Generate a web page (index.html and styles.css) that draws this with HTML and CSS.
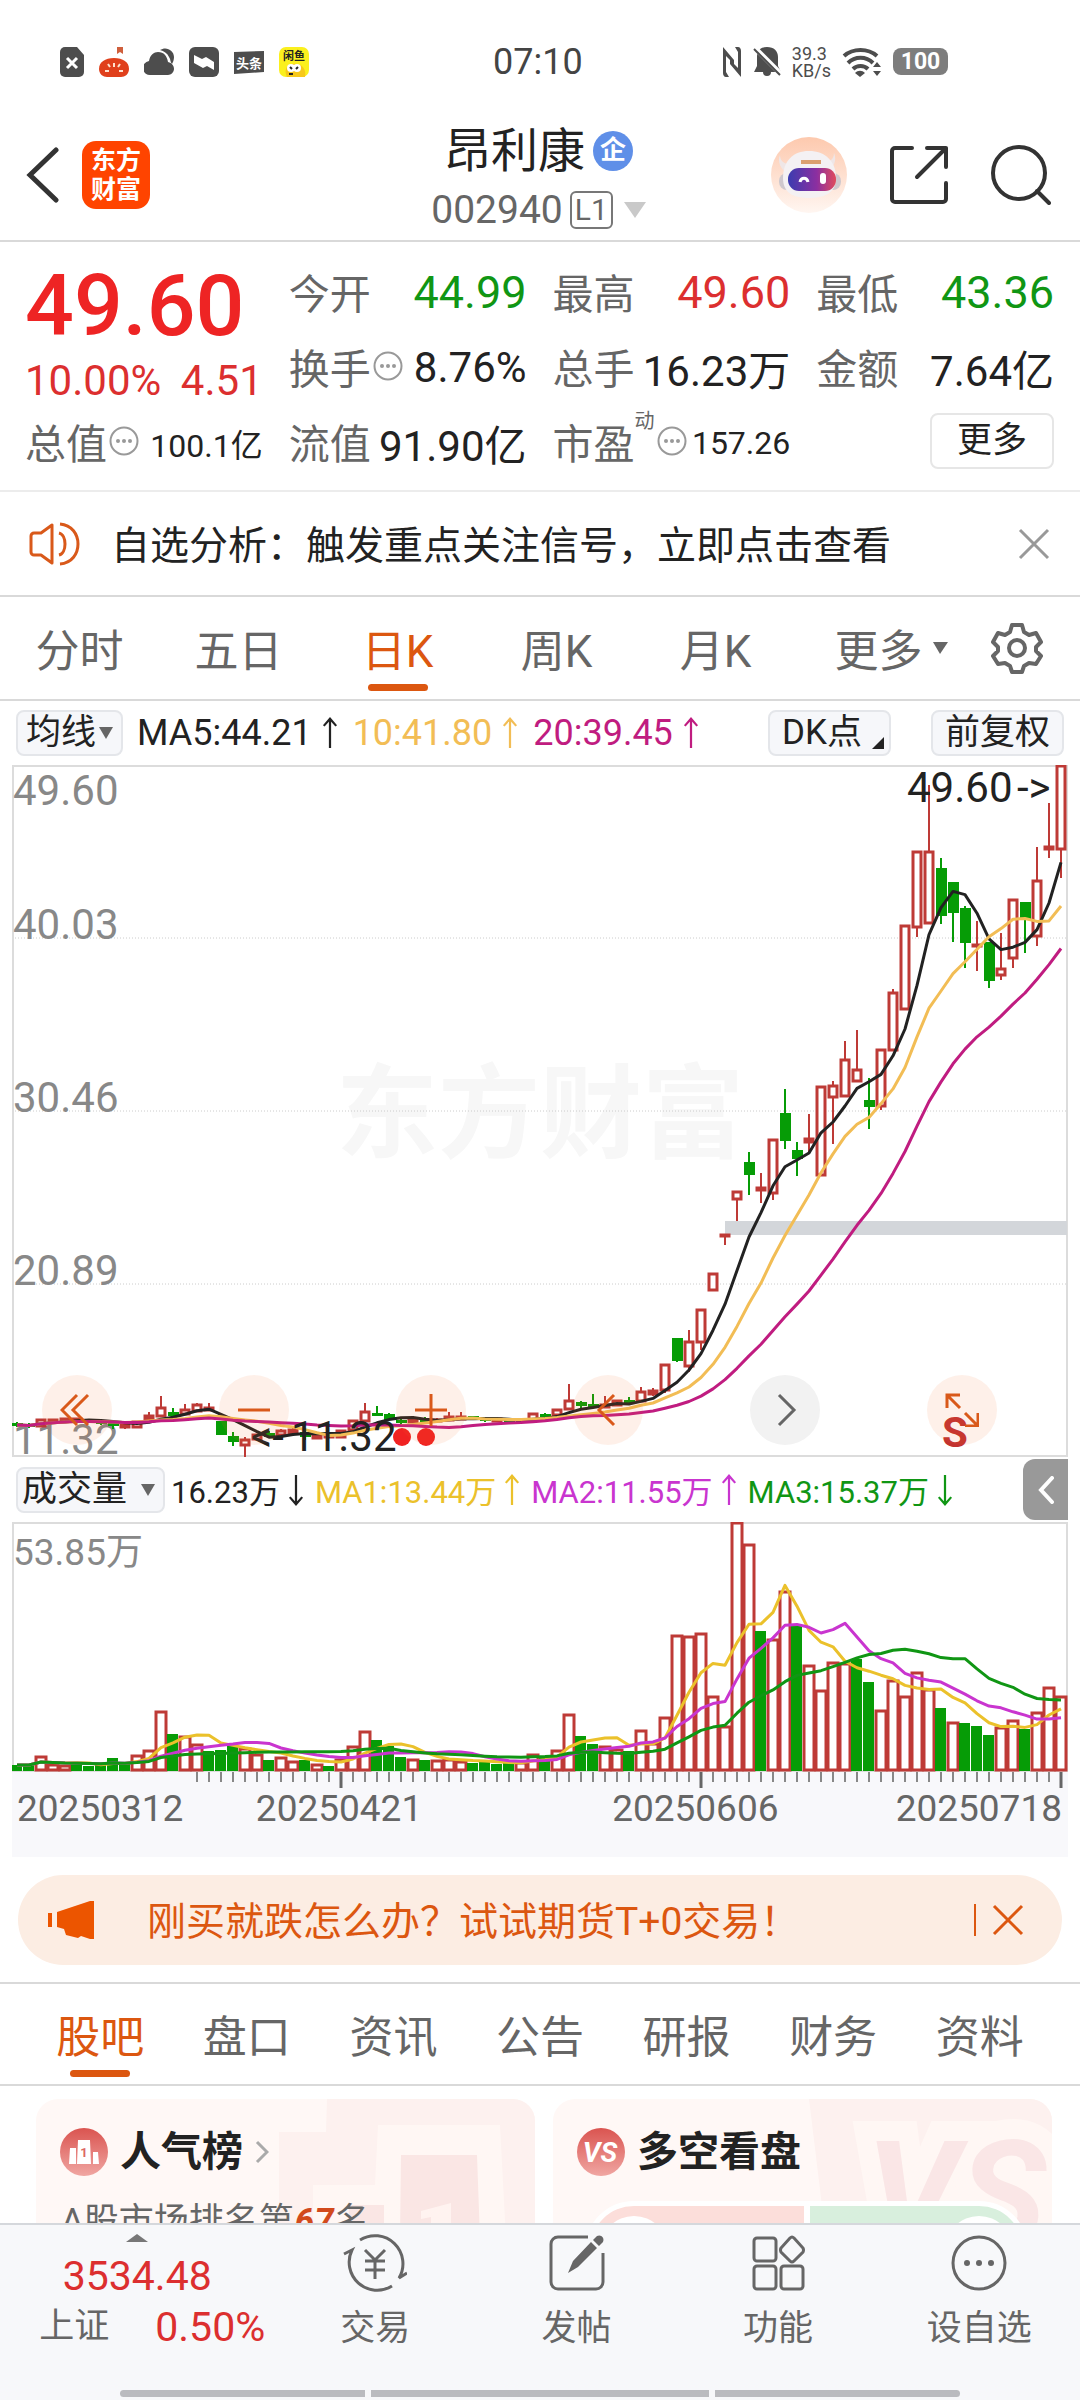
FILE: index.html
```html
<!DOCTYPE html>
<html lang="zh-CN">
<head>
    <meta charset="UTF-8">
    <meta name="viewport" content="width=device-width, initial-scale=1.0">
    <title>昂利康 002940</title>
    <link rel="stylesheet" href="styles.css">
</head>
<body>

    <svg class="defs" aria-hidden="true">
        <symbol id="arrow-up" viewBox="0 0 18 36"><path d="M9 35V2M2 10l7-8 7 8" fill="none" stroke="currentColor" stroke-width="2.5"/></symbol>
        <symbol id="arrow-down" viewBox="0 0 18 36"><path d="M9 1v33M2 26l7 8 7-8" fill="none" stroke="currentColor" stroke-width="2.5"/></symbol>
        <symbol id="info" viewBox="0 0 30 30"><circle cx="15" cy="15" r="13.5" fill="none" stroke="#999" stroke-width="2"/><g fill="#999"><circle cx="9" cy="15" r="2"/><circle cx="15" cy="15" r="2"/><circle cx="21" cy="15" r="2"/></g></symbol>
        <symbol id="cross" viewBox="0 0 32 32"><path d="M2 2l28 28M30 2L2 30" fill="none" stroke="currentColor" stroke-width="3"/></symbol>
    </svg>

    <div class="app">

        <div class="status">
            <div class="status-apps">
                <svg width="24" height="30" viewBox="0 0 24 30"><path d="M5 0h12l7 8v17a5 5 0 0 1-5 5H5a5 5 0 0 1-5-5V5a5 5 0 0 1 5-5z" fill="#4d4d4d"/><path d="M7 11l10 10M17 11L7 21" stroke="#fff" stroke-width="3"/></svg>
                <svg width="30" height="30" viewBox="0 0 30 30"><path d="M18 0h6v7l-3-2-3 2z" fill="#cf5f3c"/><path d="M15 11c9 0 15 4 15 11 0 5-4 8-8 8H8c-4 0-8-3-8-8 0-7 6-11 15-11z" fill="#e0401c"/><path d="M15 16v4M9 17l2 3M21 17l-2 3M6 24h4M20 24h4" stroke="#ffe3d0" stroke-width="2"/></svg>
                <svg width="30" height="30" viewBox="0 0 30 30" fill="#4d4d4d"><path d="M16 3c6-4 14 0 14 7 0 3-1 5-2 7-2-2-1-4-3-7-2-4-5-6-9-7z"/><path d="M7 28a7 7 0 0 1-2-14C6 8 10 5 14 5c6 0 9 4 10 10 4 1 6 4 6 7s-3 6-6 6z"/></svg>
                <svg width="30" height="30" viewBox="0 0 30 30"><rect width="30" height="30" rx="6" fill="#4d4d4d"/><path d="M5 8l8 4 4-2 8 5v8l-7-4-4 2-9-5z" fill="#fff"/></svg>
                <svg width="30" height="30" viewBox="0 0 30 30"><path d="M0 5l30-1v21l-30 2z" fill="#4d4d4d"/><text x="15" y="21" class="app-text" font-size="13" fill="#fff">头条</text></svg>
                <svg width="30" height="30" viewBox="0 0 30 30"><rect width="30" height="30" rx="7" fill="#fbf01e"/><path d="M8 30c-3-6-1-12 5-13 9-2 15 5 13 13z" fill="#f7c81a"/><circle cx="12" cy="21" r="4" fill="#fff"/><circle cx="18" cy="21" r="4" fill="#fff"/><path d="M11 20l2 2M17 22l2-2M10 27h4" stroke="#222" stroke-width="2"/><text x="15" y="13" class="app-text" font-size="11" fill="#222">闲鱼</text></svg>
            </div>
            <div class="clock">07:10</div>
            <div class="status-sys">
                <svg width="20" height="30" viewBox="0 0 20 30" fill="#4d4d4d"><path d="M1 0l11 13v4L4 9v16l3 5H4c-2 0-3-2-3-4zM19 30L8 17v-4l8 8V5l-3-5h3c2 0 3 2 3 4z"/></svg>
                <svg width="28" height="30" viewBox="0 0 28 30"><path d="M14 0c7 0 11 4 11 10v9l3 6H18a4 4 0 0 1-8 0H1l3-6v-9C4 4 7 0 14 0z" fill="#4d4d4d"/><path d="M1 0l27 27" stroke="#fff" stroke-width="5"/><path d="M1 2l26 26" stroke="#4d4d4d" stroke-width="2"/></svg>
                <div class="speed">39.3<br>KB/s</div>
                <svg width="40" height="30" viewBox="0 0 40 30"><g fill="none" stroke="#4d4d4d" stroke-width="4"><path d="M2 9c9-8 24-8 33 0"/><path d="M6 16c7-7 18-7 25 0"/><path d="M11 22c4-4 11-4 15 0"/></g><path d="M18 30l-5-4c3-3 7-3 10 0zM35 15l4 5h-8zM35 29l4-5h-8z" fill="#4d4d4d"/></svg>
                <div class="battery">100</div>
            </div>
        </div>

        <header class="header">
            <div class="header-left">
                <button class="icon-btn" aria-label="返回"><svg width="34" height="56" viewBox="0 0 34 56"><path d="M30 3L4 28l26 25" fill="none" stroke="#333" stroke-width="5" stroke-linecap="round"/></svg></button>
                <div class="logo"><span>东方</span><span>财富</span></div>
            </div>
            <div class="title">
                <h1>昂利康<span class="badge">企</span></h1>
                <button class="code">002940<span class="level">L1</span><svg width="22" height="16" viewBox="0 0 22 16"><path d="M0 0h22L11 16z" fill="#c9c9c9"/></svg></button>
            </div>
            <div class="header-right">
                <button class="icon-btn" aria-label="智能助手">
                    <svg width="76" height="76" viewBox="0 0 76 76">
                        <defs>
                            <linearGradient id="halo" x2="0" y2="1"><stop offset="0" stop-color="#fdc9ae"/><stop offset="1" stop-color="#fff6f1"/></linearGradient>
                            <linearGradient id="visor"><stop offset="0" stop-color="#3b3cb0"/><stop offset=".6" stop-color="#8c2fa0"/><stop offset="1" stop-color="#e04b5c"/></linearGradient>
                        </defs>
                        <circle cx="38" cy="38" r="38" fill="url(#halo)"/>
                        <path d="M9 18c0 6 4 9 10 9l-3 9c-6-4-10-11-7-18zM63 16c3 7 0 14-6 18l-3-9c5 0 9-3 9-9z" fill="#efe6e6"/>
                        <rect x="8" y="36" width="62" height="17" rx="8" fill="#cfc8cd"/>
                        <path d="M38 14c16 0 27 10 27 27 0 14-10 20-27 20s-26-6-26-20c0-17 10-27 26-27z" fill="#f4f1f3"/>
                        <path d="M30 25h20" stroke="#dba06f" stroke-width="4" fill="none"/>
                        <rect x="17" y="31" width="48" height="23" rx="11" fill="url(#visor)"/>
                        <path d="M29 45c1-5 7-5 8 0" fill="none" stroke="#fff" stroke-width="3"/><rect x="49" y="36" width="6" height="11" rx="3" fill="#fff"/>
                    </svg>
                </button>
                <button class="icon-btn" aria-label="分享"><svg width="60" height="60" viewBox="0 0 60 60"><path d="M23 3H6a3 3 0 0 0-3 3v48a3 3 0 0 0 3 3h48a3 3 0 0 0 3-3V38M38 3h19v19M57 3L28 32" fill="none" stroke="#333" stroke-width="4" stroke-linecap="round" stroke-linejoin="round"/></svg></button>
                <button class="icon-btn" aria-label="搜索"><svg width="60" height="60" viewBox="0 0 60 60"><circle cx="28" cy="28" r="26" fill="none" stroke="#333" stroke-width="4"/><path d="M46 46l12 12" stroke="#333" stroke-width="4" stroke-linecap="round"/></svg></button>
            </div>
        </header>

        <section class="quote">
            <div class="price red">
                <div class="last">49.60</div>
                <div class="change"><span>10.00%</span><span>4.51</span></div>
            </div>
            <div class="cell"><span>今开</span><b class="large green">44.99</b></div>
            <div class="cell"><span>最高</span><b class="large red">49.60</b></div>
            <div class="cell"><span>最低</span><b class="large green">43.36</b></div>
            <div class="cell"><span>换手<svg class="info"><use href="#info"/></svg></span><b>8.76%</b></div>
            <div class="cell"><span>总手</span><b>16.23万</b></div>
            <div class="cell"><span>金额</span><b>7.64亿</b></div>
            <div class="cell"><span>总值<svg class="info"><use href="#info"/></svg></span><b class="small">100.1亿</b></div>
            <div class="cell"><span>流值</span><b>91.90亿</b></div>
            <div class="cell"><span>市盈<sup>动</sup><svg class="info"><use href="#info"/></svg></span><b class="small">157.26</b></div>
            <div class="cell end"><button class="more-btn">更多</button></div>
        </section>

        <section class="notice">
            <svg width="52" height="44" viewBox="0 0 52 44" fill="none" stroke="#d9591a" stroke-width="3"><path d="M23 3v38L12 33H5a3 3 0 0 1-3-3V14a3 3 0 0 1 3-3h7z" stroke-linejoin="round"/><path d="M30 11c8 2 8 20 0 22M31 2c24 2 24 38 0 40"/></svg>
            <a href="#">自选分析：触发重点关注信号，立即点击查看</a>
            <button class="icon-btn gray" aria-label="关闭"><svg width="32" height="32"><use href="#cross"/></svg></button>
        </section>

        <nav class="periods">
            <button>分时</button>
            <button>五日</button>
            <button class="active">日K</button>
            <button>周K</button>
            <button>月K</button>
            <button class="period-more">更多<svg width="15" height="12" viewBox="0 0 15 12"><path d="M0 0h15L7 12z" fill="#666"/></svg></button>
            <button class="gear" aria-label="设置"><svg width="52" height="52" viewBox="0 0 52 52" fill="none" stroke="#666" stroke-width="4" stroke-linejoin="round"><path d="M21 3h10l2 7 5 3 7-2 5 9-5 5v4l5 5-5 8-7-1-5 3-2 6H21l-2-6-5-3-7 1-5-8 5-5v-4l-5-5 5-9 7 2 5-3z"/><circle cx="26" cy="26" r="8"/></svg></button>
        </nav>

        <div class="legend">
            <button class="tag">均线<svg width="14" height="12" viewBox="0 0 14 12"><path d="M0 0h14L7 12z" fill="#666"/></svg></button>
            <span class="ma black">MA5:44.21<svg class="arrow"><use href="#arrow-up"/></svg></span>
            <span class="ma amber">10:41.80<svg class="arrow"><use href="#arrow-up"/></svg></span>
            <span class="ma magenta">20:39.45<svg class="arrow"><use href="#arrow-up"/></svg></span>
            <button class="tag wide dk">DK点<svg width="12" height="12" viewBox="0 0 12 12"><path d="M12 0v12H0z" fill="#222"/></svg></button>
            <button class="tag wide">前复权</button>
        </div>

        <div class="chart">
            <svg id="kline" viewBox="0 0 1056 692"></svg>
            <div class="controls">
                <button aria-label="最左"><svg viewBox="0 0 34 34"><path d="M17 2L2 17l15 15M28 2L13 17l15 15"/></svg></button>
                <button aria-label="缩小"><svg viewBox="0 0 34 34"><path d="M1 17h32"/></svg></button>
                <button aria-label="放大"><svg viewBox="0 0 34 34"><path d="M1 17h32M17 1v32"/></svg></button>
                <button aria-label="左移"><svg viewBox="0 0 34 34"><path d="M23 2L8 17l15 15"/></svg></button>
                <button aria-label="右移" class="off"><svg viewBox="0 0 34 34"><path d="M11 2l15 15-15 15"/></svg></button>
                <button aria-label="全屏"><svg viewBox="0 0 34 34"><path d="M2 15V2h13M2 2l13 13M33 20v13H20M33 33L20 20"/></svg></button>
            </div>
        </div>

        <div class="legend volume-legend">
            <button class="tag">成交量<svg width="14" height="12" viewBox="0 0 14 12"><path d="M0 0h14L7 12z" fill="#666"/></svg></button>
            <span class="ma black">16.23万<svg class="arrow"><use href="#arrow-down"/></svg></span>
            <span class="ma gold">MA1:13.44万<svg class="arrow"><use href="#arrow-up"/></svg></span>
            <span class="ma violet">MA2:11.55万<svg class="arrow"><use href="#arrow-up"/></svg></span>
            <span class="ma green">MA3:15.37万<svg class="arrow"><use href="#arrow-down"/></svg></span>
            <button class="collapse" aria-label="展开"><svg width="16" height="28" viewBox="0 0 16 28"><path d="M14 2L3 14l11 12" fill="none" stroke="#fff" stroke-width="4" stroke-linecap="round"/></svg></button>
        </div>

        <div class="chart">
            <svg id="volume" viewBox="0 0 1056 250"></svg>
        </div>
        <div class="axis">
            <svg id="ticks" viewBox="0 0 1056 16"></svg>
            <div class="dates"><span>20250312</span><span>20250421</span><span>20250606</span><span>20250718</span></div>
        </div>

        <section class="promo">
            <svg width="46" height="40" viewBox="0 0 46 40" fill="#ec5500"><path d="M0 13h4v14H0zM9 12L42 1h4v38h-4l-9-3-3 2-12-3-2-6-7-2z"/></svg>
            <a href="#">刚买就跌怎么办？试试期货T+0交易！</a>
            <button class="icon-btn" aria-label="关闭"><svg width="32" height="32"><use href="#cross"/></svg></button>
        </section>

        <nav class="sections">
            <button class="active">股吧</button>
            <button>盘口</button>
            <button>资讯</button>
            <button>公告</button>
            <button>研报</button>
            <button>财务</button>
            <button>资料</button>
        </nav>

        <main class="cards">
            <article class="card">
                <svg class="decor" viewBox="0 0 260 140"><path d="M52 0h208v140H4V33h47z" fill="#fdf1ef"/><path d="M103 26h122l6 114H38V86h62z" fill="#fff7f4"/><path d="M126 56h76l3 84h-80zM74 106h35v34H73z" fill="#fae6e4"/><path d="M146 112l30-8v36h-20v-22l-10 2z" fill="#fff3f0"/></svg>
                <h2>
                    <svg width="48" height="48" viewBox="0 0 48 48"><defs><linearGradient id="disc" x2="0" y2="1"><stop offset="0" stop-color="#da5450"/><stop offset="1" stop-color="#f0a6a2"/></linearGradient></defs><circle cx="24" cy="24" r="24" fill="url(#disc)"/><path d="M10 20h6v16H9zM18 12h12l1 24H17zM33 24h5l1 12h-6z" fill="#fff"/><text x="24" y="29" class="app-text" font-size="13" fill="#dd6864">1</text></svg>
                    人气榜
                    <svg width="14" height="24" viewBox="0 0 14 24"><path d="M2 2l10 10L2 22" fill="none" stroke="#aaa" stroke-width="3"/></svg>
                </h2>
                <p>A股市场排名第<em>67</em>名</p>
            </article>
            <article class="card">
                <svg class="decor" viewBox="0 0 260 140"><path d="M17 0h243v140H34z" fill="#fdf1ef"/><text x="164" y="146" class="vs-outline">VS</text><text x="164" y="146" class="vs-shape">VS</text></svg>
                <h2>
                    <svg width="48" height="48" viewBox="0 0 48 48"><circle cx="24" cy="24" r="24" fill="url(#disc)"/><text x="23" y="34" class="vs-text">VS</text></svg>
                    多空看盘
                </h2>
                <div class="vote">
                    <button class="bull"><i></i>看涨</button>
                    <button class="bear">看跌<i></i></button>
                </div>
            </article>
        </main>

        <footer class="bottom">
            <div class="bar">
                <a class="index" href="#">
                    <svg width="22" height="8" viewBox="0 0 22 8"><path d="M11 0l11 8H0z" fill="#777"/></svg>
                    <span class="index-value red">3534.48</span>
                    <span class="index-row">上证<span class="red">0.50%</span></span>
                </a>
                <button>
                    <svg width="64" height="58" viewBox="0 0 64 58" fill="none" stroke="#666" stroke-width="3"><path d="M17 6A28 28 0 0 1 56 44l8-5M49 52A28 28 0 0 1 9 16l-8 4"/><path d="M22 16l10 10 10-10M22 27h20M22 36h20M32 26v19"/></svg>
                    交易
                </button>
                <button>
                    <svg width="58" height="58" viewBox="0 0 58 58"><path d="M40 3H10a7 7 0 0 0-7 7v38a7 7 0 0 0 7 7h38a7 7 0 0 0 7-7V19" fill="none" stroke="#666" stroke-width="3"/><path d="M20 39l5-12 18-19 6 6-19 19zM45 6l4-4c4-2 8 2 6 6l-4 4z" fill="#666"/></svg>
                    发帖
                </button>
                <button>
                    <svg width="54" height="58" viewBox="0 0 54 58" fill="none" stroke="#666" stroke-width="3"><rect x="3" y="4" width="22" height="23" rx="3"/><rect x="3" y="32" width="22" height="23" rx="3"/><rect x="30" y="32" width="22" height="23" rx="3"/><path d="M39 4q2-2 4 0l9 10q1 2 0 4l-9 9q-2 2-4 0l-9-9q-1-2 0-4z"/></svg>
                    功能
                </button>
                <button>
                    <svg width="58" height="58" viewBox="0 0 58 58"><circle cx="29" cy="29" r="26" fill="none" stroke="#666" stroke-width="3"/><g fill="#666"><circle cx="17" cy="29" r="3"/><circle cx="29" cy="29" r="3"/><circle cx="41" cy="29" r="3"/></g></svg>
                    设自选
                </button>
            </div>
            <div class="home"><i></i><i></i><i></i></div>
        </footer>
    </div>

    <script src="chart.js"></script>
</body>
</html>
```

FILE: styles.css
```css
* {
    box-sizing: border-box;
}
body {
    margin: 0;
    font-family: Roboto, "Noto Sans CJK SC", sans-serif;
    color: #222;
    background-color: #fff;
}
button {
    margin: 0;
    padding: 0;
    border: none;
    background: none;
    font: inherit;
    color: inherit;
    cursor: pointer;
}
a {
    color: inherit;
    text-decoration: none;
}
svg {
    display: block;
    flex: none;
}
.defs {
    position: absolute;
    width: 0;
    height: 0;
}
.app {
    display: flex;
    flex-direction: column;
    height: 100vh;
    overflow: hidden;
}
.app > * {
    flex: none;
}
.red { color: #dc2f2f; }
.green { color: #109614; }
.black { color: #222; }
.amber { color: #f2bd55; }
.magenta { color: #c01c80; }
.gold { color: #ebc12b; }
.violet { color: #c935cf; }
.gray { color: #999; }

/* status bar */
.status {
    display: grid;
    grid-template-columns: 433px auto 1fr;
    align-items: center;
    height: 123px;
    padding: 0 132px 0 60px;
}
.status-apps,
.status-sys {
    display: flex;
    align-items: center;
    gap: 15px;
}
.status-sys {
    justify-content: flex-end;
    gap: 11px;
}
.app-text {
    font-weight: 700;
    text-anchor: middle;
}
.clock {
    font-size: 36px;
    color: #444;
}
.speed {
    font-size: 18px;
    line-height: 17px;
    color: #4d4d4d;
}
.battery {
    width: 55px;
    border-radius: 8px;
    background-color: #7d7d7d;
    color: #fff;
    font-size: 23px;
    font-weight: 700;
    line-height: 27px;
    text-align: center;
}

/* header */
.header {
    display: grid;
    grid-template-columns: 1fr auto 1fr;
    height: 119px;
    padding: 0 29px 0 26px;
    border-bottom: 2px solid #d9d9d9;
}
.header-left,
.header-right {
    display: flex;
    align-items: center;
    height: 104px;
    gap: 22px;
}
.header-right {
    justify-content: flex-end;
    gap: 42px;
}
.logo {
    display: flex;
    flex-direction: column;
    justify-content: center;
    width: 68px;
    height: 68px;
    border-radius: 14px;
    background-color: #ff4400;
    color: #fff;
    font-size: 25px;
    font-weight: 700;
    line-height: 29px;
    text-align: center;
}
.title {
    display: flex;
    flex-direction: column;
    align-items: center;
}
.title h1 {
    display: flex;
    align-items: center;
    gap: 8px;
    margin: 0;
    font-size: 47px;
    font-weight: 400;
    line-height: 56px;
}
.badge {
    width: 40px;
    height: 40px;
    border-radius: 50%;
    background-color: #5f8fe8;
    color: #fff;
    font-size: 26px;
    font-weight: 700;
    line-height: 38px;
    text-align: center;
}
.code {
    display: flex;
    align-items: center;
    gap: 7px;
    color: #666;
    font-size: 39px;
    line-height: 62px;
}
.level {
    padding: 0 3px;
    border: 2px solid #777;
    border-radius: 6px;
    font-size: 30px;
    line-height: 34px;
}
.code svg {
    margin-left: 4px;
}

/* quote */
.quote {
    display: grid;
    grid-template-columns: repeat(4, 1fr);
    grid-auto-rows: 75px;
    column-gap: 26px;
    padding: 14px 26px 9px 25px;
    border-bottom: 2px solid #ececec;
}
.price {
    grid-row: span 2;
}
.last {
    color: #ee2424;
    font-size: 86px;
    font-weight: 500;
    line-height: 100px;
}
.change {
    display: flex;
    justify-content: space-between;
    font-size: 42px;
    line-height: 50px;
}
.cell {
    display: flex;
    align-items: center;
    justify-content: space-between;
    font-size: 42px;
    white-space: nowrap;
}
.cell span {
    display: flex;
    align-items: center;
    padding-bottom: 5px;
    color: #666;
    font-size: 41px;
}
.cell b {
    padding-bottom: 3px;
    font-weight: 400;
}
.cell b.large {
    font-size: 45px;
}
.cell b.small {
    padding-bottom: 2px;
    font-size: 32px;
}
.cell.end {
    justify-content: flex-end;
}
.cell sup {
    align-self: flex-start;
    font-size: 20px;
    line-height: 20px;
}
.info {
    width: 30px;
    height: 30px;
    margin-left: 2px;
}
.more-btn {
    width: 124px;
    height: 56px;
    margin-bottom: 6px;
    border: 2px solid #e6e6e6;
    border-radius: 8px;
    font-size: 35px;
    line-height: 50px;
}

/* notice */
.notice {
    display: flex;
    align-items: center;
    height: 105px;
    padding: 0 30px 0 29px;
    border-bottom: 2px solid #d9d9d9;
    font-size: 39px;
}
.notice a {
    flex: 1;
    margin-left: 30px;
    padding-bottom: 3px;
}

/* tabs */
.periods,
.sections {
    display: grid;
    height: 104px;
    border-bottom: 2px solid #d9d9d9;
    color: #666;
    font-size: 44px;
}
.periods {
    grid-template-columns: repeat(5, 159fr) 192fr 93fr;
}
.sections {
    grid-template-columns: repeat(7, 1fr);
    padding: 0 27px;
}
.periods button,
.sections button {
    display: flex;
    flex-direction: column;
    align-items: center;
    justify-content: center;
}
.periods .active,
.sections .active {
    color: #dc5710;
}
.active::before,
.active::after {
    content: "";
    width: 60px;
    height: 7px;
    margin-top: 4px;
    border-radius: 4px;
}
.active::after {
    background-color: #dc5710;
}
.periods .period-more {
    flex-direction: row;
    gap: 10px;
}
.periods .gear {
    align-items: flex-start;
    padding-left: 4px;
}

/* chart */
.legend {
    display: flex;
    align-items: center;
    gap: 14px;
    height: 64px;
    padding: 0 16px;
    font-size: 36px;
    white-space: nowrap;
}
.tag {
    display: flex;
    align-items: center;
    height: 46px;
    padding: 0 8px;
    border: 2px solid #e4e6ea;
    border-radius: 8px;
    background-color: #f6f7fa;
    font-size: 35px;
    line-height: 42px;
}
.tag svg {
    margin-left: 3px;
}
.tag.wide {
    padding: 0 12px;
}
.tag.dk {
    margin-left: auto;
    margin-right: 26px;
}
.tag.dk svg {
    align-self: flex-end;
    margin: 0 -7px 5px 10px;
}
.ma {
    display: flex;
    align-items: center;
    gap: 9px;
}
.arrow {
    width: 18px;
    height: 32px;
}
.volume-legend {
    gap: 10px;
    height: 65px;
}
.volume-legend .tag {
    padding: 0 8px 0 4px;
}
.volume-legend .tag svg {
    margin-left: 14px;
}
.volume-legend .ma {
    gap: 7px;
    font-size: 31px;
}
.volume-legend .ma:nth-child(2) {
    margin-left: -4px;
}
.collapse {
    display: flex;
    align-items: center;
    justify-content: center;
    width: 45px;
    height: 61px;
    margin-left: auto;
    margin-right: -4px;
    border-radius: 12px 0 0 12px;
    background-color: #999;
}
.chart {
    position: relative;
    margin: 0 12px;
}
.chart > svg {
    width: 100%;
}
.frame { fill: none; stroke: #dcdcdc; stroke-width: 4; }
.grid-line { stroke: #ccc; stroke-width: 1; stroke-dasharray: 1 2; }
.watermark { fill: #f7f7f7; font-size: 102px; font-weight: 700; text-anchor: middle; }
.scale { fill: #888; font-size: 42px; }
.scale.amount { font-size: 37px; }
.mark { fill: #222; font-size: 42px; }
.mark-sell { fill: #c23230; font-size: 42px; font-weight: 700; text-anchor: middle; }
.band { fill: #d3d6da; }
.dot { fill: #f02222; }
.up { fill: #fff; stroke: #be3a36; stroke-width: 3; }
.down { fill: #069c06; stroke: #069c06; stroke-width: 2; }
.wick { stroke-width: 2; }
.line { fill: none; stroke: currentColor; stroke-width: 3; stroke-linejoin: round; }
.controls {
    position: absolute;
    left: 30px;
    right: 71px;
    bottom: 12px;
    display: flex;
    justify-content: space-between;
}
.controls button {
    display: flex;
    align-items: center;
    justify-content: center;
    width: 70px;
    height: 70px;
    border-radius: 50%;
    background-color: rgba(250, 110, 40, 0.1);
}
.controls svg {
    width: 34px;
    height: 34px;
    fill: none;
    stroke: #d9591a;
    stroke-width: 3;
}
.controls .off {
    background-color: #f2f2f2;
}
.controls .off svg {
    stroke: #666;
}
.axis {
    height: 85px;
    margin: 0 12px;
    background-color: #f8f8fb;
}
.axis svg {
    width: 100%;
}
.tick { stroke: #888; stroke-width: 2; }
.tick.major { stroke: #666; stroke-width: 3; }
.dates {
    display: grid;
    grid-template-columns: 240fr 358fr 260fr 192fr;
    padding: 0 6px 0 5px;
    color: #666;
    font-size: 37px;
    line-height: 42px;
}
.dates span:last-child {
    text-align: right;
}

/* promo */
.promo {
    display: flex;
    align-items: center;
    height: 90px;
    margin: 18px 18px 17px;
    padding: 0 38px 0 30px;
    border-radius: 45px;
    background-color: #fcede3;
    color: #dc5710;
    font-size: 39px;
}
.promo a {
    flex: 1;
    margin-left: 53px;
    padding-bottom: 4px;
}
.promo .icon-btn {
    padding-left: 16px;
    border-left: 2px solid #dc5710;
}
.sections {
    border-top: 2px solid #d9d9d9;
}

/* cards */
.app > .cards {
    flex: 1;
    display: grid;
    grid-template-columns: 1fr 1fr;
    gap: 18px;
    min-height: 0;
    padding: 13px 28px 0 36px;
    overflow: hidden;
}
.card {
    position: relative;
    height: 300px;
    padding: 28px 24px;
    border-radius: 22px;
    overflow: hidden;
    background-color: #fff8f6;
}
.card > * {
    position: relative;
}
.card .decor {
    position: absolute;
    top: 0;
    right: 0;
    width: 260px;
    height: 140px;
}
.card h2 {
    display: flex;
    align-items: center;
    gap: 12px;
    margin: 0;
    font-size: 41px;
    font-weight: 700;
    line-height: 50px;
}
.card p {
    margin: 18px 0 0;
    padding-left: 1px;
    color: #666;
    font-size: 35px;
    line-height: 54px;
}
.card em {
    padding: 0 1px;
    color: #d24a1c;
    font-weight: 700;
}
.vs-text,
.vs-outline,
.vs-shape {
    font-size: 28px;
    font-weight: 700;
    font-style: italic;
    text-anchor: middle;
    fill: #fff;
}
.vs-outline,
.vs-shape {
    font-size: 146px;
    fill: #fae6e6;
}
.vs-outline {
    stroke: #fff7f4;
    stroke-width: 40px;
}
.vote {
    display: grid;
    grid-template-columns: 1fr 1fr;
    gap: 6px;
    margin: 24px 0 0 8px;
    border: 5px solid #fff;
    border-radius: 49px;
    background-color: #fff;
    font-size: 34px;
}
.vote button {
    display: flex;
    align-items: center;
    gap: 28px;
    height: 88px;
    padding: 0 10px;
}
.vote i {
    width: 68px;
    height: 68px;
    border-radius: 50%;
    background-color: #fff;
}
.vote .bull {
    gap: 36px;
    border-radius: 44px 0 0 44px;
    background-color: #fcdeda;
    color: #d24a1c;
}
.vote .bear {
    justify-content: flex-end;
    border-radius: 0 44px 44px 0;
    background-color: #d8efdd;
    color: #35a35a;
}

/* bottom bar */
.bottom {
    height: 177px;
    border-top: 2px solid #d5d8dc;
    background-color: #f7f8fa;
}
.bar {
    display: grid;
    grid-template-columns: 274fr repeat(4, 201fr);
    height: 165px;
    color: #666;
    font-size: 35px;
}
.bar button {
    display: flex;
    flex-direction: column;
    align-items: center;
    gap: 14px;
    padding-top: 9px;
    line-height: 46px;
}
.index {
    display: flex;
    flex-direction: column;
    align-items: center;
    padding-top: 9px;
}
.index-value {
    font-size: 41px;
    line-height: 68px;
}
.index-row {
    display: flex;
    align-items: center;
    gap: 46px;
    padding-left: 30px;
    line-height: 34px;
}
.index-row .red {
    font-size: 41px;
}
.home {
    display: grid;
    grid-template-columns: 245fr 338fr 245fr;
    gap: 6px;
    padding: 0 120px;
}
.home i {
    height: 7px;
    background-color: #babbbf;
}
.home i:first-child {
    border-radius: 4px 0 0 4px;
}
.home i:last-child {
    border-radius: 0 4px 4px 0;
}
```

FILE: chart.js
```js
const STEP = 12;
const FIRST = 5;

// [direction, high, body top, body bottom, low], measured down from the top of the chart
const candles = [
    ['d', 657, 659, 660, 662], ['d', 658, 660, 661, 663], ['u', 655, 655, 661, 662], ['u', 654, 655, 657, 658],
    ['u', 653, 654, 656, 657], ['u', 653, 654, 656, 658], ['d', 654, 655, 657, 658], ['d', 655, 656, 658, 660],
    ['d', 656, 658, 660, 664], ['u', 658, 660, 662, 664], ['u', 656, 657, 662, 662], ['u', 647, 651, 654, 655],
    ['u', 631, 643, 651, 651], ['d', 643, 648, 650, 651], ['u', 639, 645, 649, 650], ['u', 638, 640, 646, 646],
    ['u', 638, 643, 645, 645], ['d', 656, 657, 669, 669], ['d', 667, 672, 676, 681], ['u', 672, 675, 680, 692],
    ['u', 669, 670, 674, 674], ['d', 666, 669, 671, 672], ['u', 664, 666, 670, 670], ['u', 663, 665, 668, 668],
    ['d', 666, 668, 671, 675], ['u', 669, 671, 673, 673], ['u', 668, 670, 672, 673], ['u', 665, 666, 672, 672],
    ['u', 655, 656, 665, 665], ['u', 638, 647, 656, 658], ['d', 641, 649, 650, 651], ['d', 648, 650, 654, 655],
    ['d', 654, 656, 657, 659], ['u', 651, 654, 657, 657], ['d', 652, 655, 656, 658], ['u', 653, 655, 656, 658],
    ['u', 647, 652, 655, 656], ['u', 647, 652, 654, 655], ['d', 651, 652, 654, 655], ['d', 652, 654, 655, 657],
    ['u', 653, 654, 656, 657], ['d', 653, 655, 656, 658], ['d', 654, 656, 657, 659], ['u', 648, 649, 655, 655],
    ['d', 648, 650, 651, 653], ['u', 644, 645, 650, 650], ['u', 619, 636, 644, 645], ['d', 636, 638, 640, 643],
    ['d', 629, 640, 641, 643], ['u', 631, 640, 642, 643], ['u', 635, 636, 640, 641], ['d', 632, 636, 638, 640],
    ['u', 622, 627, 636, 637], ['u', 623, 626, 629, 631], ['u', 600, 600, 625, 628], ['d', 574, 574, 595, 597],
    ['u', 565, 577, 601, 607], ['u', 545, 545, 577, 585], ['u', 509, 509, 525, 525], ['u', 470, 470, 471, 480],
    ['u', 427, 427, 434, 456], ['d', 387, 398, 409, 430], ['u', 408, 423, 425, 438], ['u', 375, 375, 428, 435],
    ['d', 324, 349, 375, 384], ['d', 377, 386, 393, 411], ['u', 349, 374, 377, 387], ['u', 322, 322, 410, 410],
    ['u', 316, 321, 332, 379], ['u', 276, 295, 331, 331], ['u', 265, 305, 316, 316], ['d', 313, 336, 341, 364],
    ['u', 285, 285, 341, 345], ['u', 224, 228, 285, 285], ['u', 161, 161, 244, 244], ['u', 87, 87, 162, 172],
    ['u', 20, 87, 158, 158], ['d', 93, 104, 150, 159], ['d', 117, 118, 147, 177], ['d', 141, 144, 177, 203],
    ['u', 156, 180, 181, 206], ['d', 177, 178, 215, 223], ['u', 168, 204, 210, 215], ['u', 135, 135, 193, 203],
    ['d', 138, 138, 153, 188], ['u', 82, 116, 171, 181], ['u', 38, 82, 84, 93], ['u', 1, 1, 84, 113]
];

const volumes = [
    'd7', 'd7', 'u16', 'u8', 'u7', 'd8', 'd6', 'd7', 'd14', 'd8', 'u17', 'u22', 'u61', 'd38', 'u36', 'u28',
    'd21', 'd22', 'd26', 'u24', 'u18', 'd12', 'u15', 'u11', 'd12', 'u8', 'd6', 'u13', 'u26', 'u41', 'd32', 'd26',
    'd15', 'u13', 'd12', 'u12', 'u13', 'u11', 'd9', 'd10', 'd8', 'd9', 'u10', 'u18', 'd16', 'u22', 'u58', 'd36',
    'd28', 'u26', 'u23', 'd21', 'u42', 'u29', 'u55', 'u137', 'u136', 'u139', 'u76', 'u46', 'u250', 'u228', 'd141', 'u133',
    'u181', 'd146', 'u107', 'u82', 'u110', 'u109', 'd113', 'd90', 'u62', 'u92', 'u76', 'u100', 'u83', 'd64', 'u50', 'd49',
    'd46', 'd37', 'u45', 'u52', 'd43', 'u60', 'u85', 'u76'
];

function x(i) {
    return FIRST + STEP * i;
}

function averageLine(values, size, color) {
    const points = values.map((v, i) => {
        const part = values.slice(Math.max(0, i - size + 1), i + 1);
        const mean = part.reduce((a, b) => a + b, 0) / part.length;
        return `${x(i)},${mean.toFixed(1)}`;
    });
    return `<polyline class="line ${color}" points="${points.join(' ')}"/>`;
}

function drawKline() {
    let out = '<text class="watermark" x="528" y="385">东方财富</text>';
    [173, 346, 519].forEach(y => {
        out += `<line class="grid-line" x1="0" x2="1056" y1="${y}" y2="${y}"/>`;
    });
    out += '<rect class="frame" x="0" y="0" width="1056" height="692"/>';
    out += '<rect class="band" x="713" y="456" width="342" height="14"/>';

    const labels = [['49.60', 40], ['40.03', 174], ['30.46', 347], ['20.89', 520], ['11.32', 689]];
    labels.forEach(([text, y]) => {
        out += `<text class="scale" x="1" y="${y}">${text}</text>`;
    });

    candles.forEach(([dir, high, top, bottom, low], i) => {
        const cls = dir === 'u' ? 'up' : 'down';
        const width = dir === 'u' ? 8 : 9;
        out += `<line class="${cls} wick" x1="${x(i)}" x2="${x(i)}" y1="${high}" y2="${low}"/>`;
        out += `<rect class="${cls}" x="${x(i) - 4}" y="${top}" width="${width}" height="${bottom - top}"/>`;
    });

    const closes = candles.map(c => c[0] === 'u' ? c[2] : c[3]);
    out += averageLine(closes, 5, 'black');
    out += averageLine(closes, 10, 'amber');
    out += averageLine(closes, 20, 'magenta');

    out += '<text class="mark" x="895" y="37">49.60</text><text class="mark" x="1005" y="37">-&gt;</text>';
    out += '<text class="mark" x="239" y="686">&lt;-</text><text class="mark" x="279" y="686">11.32</text>';
    out += '<circle class="dot" cx="390" cy="672" r="9"/><circle class="dot" cx="414" cy="672" r="9"/>';
    out += '<text class="mark-sell" x="943" y="682">S</text>';
    document.getElementById('kline').innerHTML = out;
}

function drawVolume() {
    let out = '<rect class="frame" x="0" y="0" width="1056" height="250"/>';
    out += '<text class="scale amount" x="1" y="43">53.85万</text>';
    const heights = volumes.map(v => Number(v.slice(1)));
    volumes.forEach((v, i) => {
        const cls = v[0] === 'u' ? 'up' : 'down';
        const width = v[0] === 'u' ? 10 : 9;
        out += `<rect class="${cls}" x="${x(i) - 5}" y="${251 - heights[i]}" width="${width}" height="${heights[i] - 3}"/>`;
    });
    const tops = heights.map(h => 250 - h);
    out += averageLine(tops, 5, 'gold');
    out += averageLine(tops, 10, 'violet');
    out += averageLine(tops, 20, 'green');
    document.getElementById('volume').innerHTML = out;
}

function drawTicks() {
    let out = '';
    for (let i = 15; i < candles.length; i++) {
        const major = i % 30 === 27;
        out += `<line class="tick${major ? ' major' : ''}" x1="${x(i)}" x2="${x(i)}" y1="0" y2="${major ? 16 : 10}"/>`;
    }
    document.getElementById('ticks').innerHTML = out;
}

drawKline();
drawVolume();
drawTicks();
```
